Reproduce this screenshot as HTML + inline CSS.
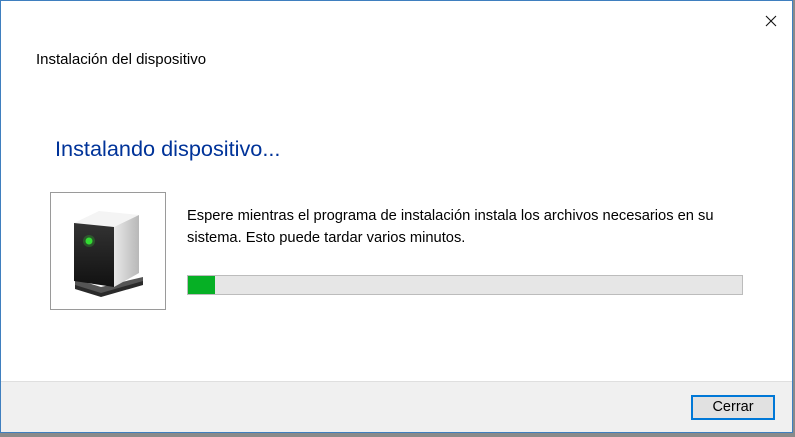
<!DOCTYPE html>
<html><head><meta charset="utf-8"><style>
body{margin:0;width:795px;height:437px;background:#8a8a8a;position:relative;overflow:hidden;font-family:"Liberation Sans",sans-serif;}
.win{position:absolute;left:0;top:0;width:791px;height:431px;border:1px solid #3f7fbf;background:#fff;}
.foot{position:absolute;left:0;right:0;top:380px;bottom:0;background:#f0f0f0;border-top:1px solid #dfdfdf;}
.t{position:absolute;white-space:nowrap;color:#000;}
</style></head><body>
<div class="win">
<svg style="position:absolute;left:764px;top:14px" width="12" height="12"><path d="M1 1L11 11M11 1L1 11" stroke="#111" stroke-width="1.1"/></svg>
<div class="t" style="left:35px;top:50px;font-size:15px">Instalación del dispositivo</div>
<div class="t" style="left:54px;top:135px;font-size:21.7px;color:#003399">Instalando dispositivo...</div>
<div style="position:absolute;left:49px;top:191px;width:114px;height:116px;border:1px solid #9a9a9a;"></div>
<svg style="position:absolute;left:60px;top:200px" width="100" height="100" viewBox="0 0 100 100">
<defs><linearGradient id="s" x1="0" x2="1"><stop offset="0" stop-color="#e8e8e8"/><stop offset="1" stop-color="#b8b8b8"/></linearGradient>
<linearGradient id="f" x1="0" y1="0" x2="0" y2="1"><stop offset="0" stop-color="#333"/><stop offset="1" stop-color="#111"/></linearGradient></defs>
<path d="M14 88L40 96L82 84L82 78L40 90L14 82Z" fill="#2a2a2a"/>
<path d="M14 78L40 86L82 76L82 80L40 92L14 84Z" fill="#555"/>
<path d="M13 22L38 10L78 14L53 26Z" fill="#f4f4f4"/>
<path d="M53 26L78 14L78 72L53 86Z" fill="url(#s)"/>
<path d="M13 22L53 26L53 86L13 80Z" fill="url(#f)"/>
<circle cx="28" cy="40" r="3.5" fill="#33dd33"/>
<circle cx="28" cy="40" r="6" fill="#33dd33" opacity="0.25"/>
</svg>
<div class="t" style="left:186px;top:204px;font-size:14.7px;line-height:22px;">Espere mientras el programa de instalación instala los archivos necesarios en su<br>sistema. Esto puede tardar varios minutos.</div>
<div style="position:absolute;left:186px;top:274px;width:554px;height:18px;border:1px solid #bcbcbc;background:#e6e6e6;"><div style="width:27px;height:18px;background:#06b025"></div></div>
<div class="foot">
<div style="position:absolute;left:690px;top:13px;width:84px;height:25px;border:2px solid #0078d7;background:#e1e1e1;box-sizing:border-box;text-align:center;font-size:14.5px;line-height:21px;">Cerrar</div>
</div>
</div>
</body></html>
